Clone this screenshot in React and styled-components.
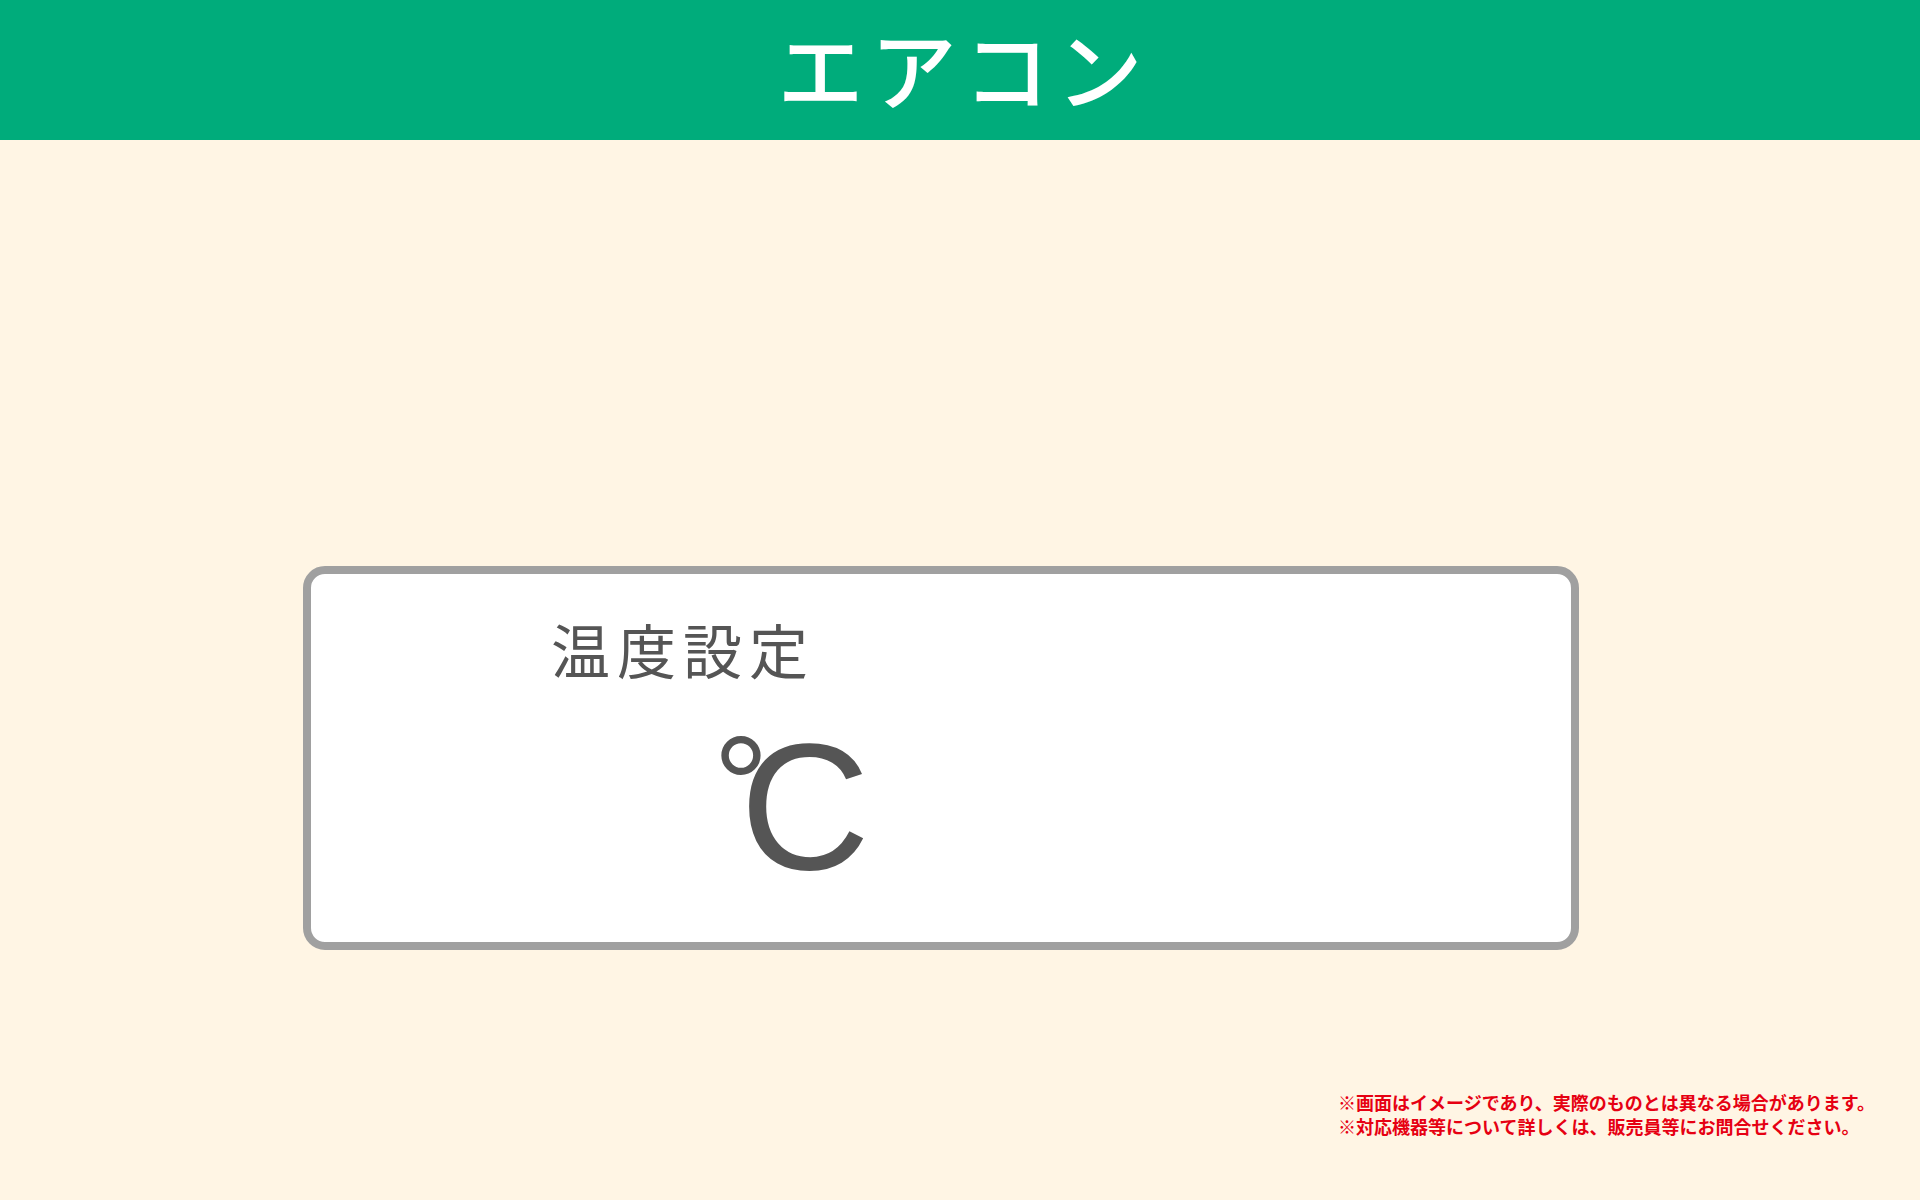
import React from 'react';
import styled, { createGlobalStyle } from 'styled-components';

const GlobalStyle = createGlobalStyle`
	html, body {
		margin: 0;
		padding: 0;
		background: #fff5e4;
	}
	body {
		font-family: "Noto Sans CJK JP", "Noto Sans", sans-serif;
	}
`;

const Page = styled.div`
	width: 1920px;
	height: 1200px;
	display: flex;
	flex-direction: column;
	background: #fff5e4;
	overflow: hidden;
`;

const Header = styled.header`
	height: 140px;
	background: #00ac7b;
	display: flex;
	align-items: center;
	justify-content: center;
`;

const Title = styled.h1`
	margin: 0 0 6px;
	padding-left: 7px;
	font-size: 86px;
	font-weight: 500;
	letter-spacing: 7px;
	line-height: 1;
	color: #ffffff;
`;

const Main = styled.main`
	padding: 426px 0 0 303px;
`;

const Panel = styled.section`
	box-sizing: border-box;
	width: 1276px;
	height: 384px;
	background: #ffffff;
	border: 8px solid #a0a0a0;
	border-radius: 22px;
	padding: 43px 0 0 240px;
	color: #555555;
`;

const Label = styled.div`
	font-size: 59px;
	line-height: 1.1;
	letter-spacing: 7px;
	font-weight: 400;
`;

const Reading = styled.div`
	display: flex;
	align-items: flex-start;
	padding: 35px 0 0 162px;
	font-family: "Liberation Sans", Arial, sans-serif;
	line-height: 1;
`;

const Degree = styled.span`
	font-size: 140px;
	margin-top: -1px;
	margin-right: -29px;
`;

const Unit = styled.span`
	font-size: 180px;
`;

const Notes = styled.footer`
	margin-top: auto;
	padding: 0 0 62px 1338px;
	color: #e60012;
	font-size: 18px;
	font-weight: 700;
	line-height: 24px;
`;

const Note = styled.p`
	margin: 0;
	white-space: nowrap;
`;

function App() {
	return (
		<Page>
			<GlobalStyle />
			<Header>
				<Title>エアコン</Title>
			</Header>
			<Main>
				<Panel>
					<Label>温度設定</Label>
					<Reading>
						<Degree>°</Degree>
						<Unit>C</Unit>
					</Reading>
				</Panel>
			</Main>
			<Notes>
				<Note>※画面はイメージであり、実際のものとは異なる場合があります。</Note>
				<Note>※対応機器等について詳しくは、販売員等にお問合せください。</Note>
			</Notes>
		</Page>
	);
}

export default App;
